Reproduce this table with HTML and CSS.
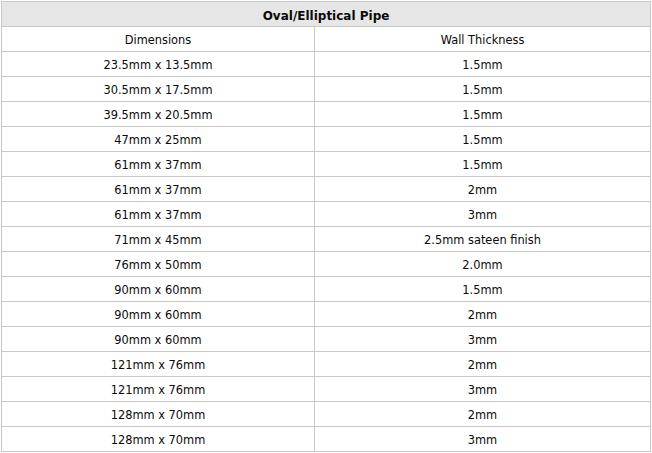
FILE: index.html
```html
<!DOCTYPE html>
<html>
<head>
<meta charset="utf-8">
<link rel="stylesheet" href="styles.css">
</head>
<body>
<table class="spec">
  <colgroup><col class="c1"><col class="c2"></colgroup>
  <thead>
    <tr><th colspan="2" class="title">Oval/Elliptical Pipe</th></tr>
  </thead>
  <tbody>
    <tr><td>Dimensions</td><td>Wall Thickness</td></tr>
    <tr><td>23.5mm x 13.5mm</td><td>1.5mm</td></tr>
    <tr><td>30.5mm x 17.5mm</td><td>1.5mm</td></tr>
    <tr><td>39.5mm x 20.5mm</td><td>1.5mm</td></tr>
    <tr><td>47mm x 25mm</td><td>1.5mm</td></tr>
    <tr><td>61mm x 37mm</td><td>1.5mm</td></tr>
    <tr><td>61mm x 37mm</td><td>2mm</td></tr>
    <tr><td>61mm x 37mm</td><td>3mm</td></tr>
    <tr><td>71mm x 45mm</td><td>2.5mm sateen finish</td></tr>
    <tr><td>76mm x 50mm</td><td>2.0mm</td></tr>
    <tr><td>90mm x 60mm</td><td>1.5mm</td></tr>
    <tr><td>90mm x 60mm</td><td>2mm</td></tr>
    <tr><td>90mm x 60mm</td><td>3mm</td></tr>
    <tr><td>121mm x 76mm</td><td>2mm</td></tr>
    <tr><td>121mm x 76mm</td><td>3mm</td></tr>
    <tr><td>128mm x 70mm</td><td>2mm</td></tr>
    <tr><td>128mm x 70mm</td><td>3mm</td></tr>
  </tbody>
</table>
</body>
</html>
```
FILE: styles.css
```css
html, body {
  margin: 0;
  padding: 0;
  background: #fff;
}
body {
  padding: 1px 0 0 1px;
  font-family: "DejaVu Sans", Verdana, sans-serif;
  font-size: 11.4px;
  color: #0a0a0a;
}
.spec {
  border-collapse: separate;
  border-spacing: 0;
  table-layout: fixed;
  width: 650px;
  border-left: 1px solid #c8c8c8;
  border-top: 1px solid #c8c8c8;
}
.c1 { width: 313px; }
.c2 { width: 336px; }
.spec th,
.spec td {
  height: 24px;
  padding: 0;
  border-right: 1px solid #c8c8c8;
  border-bottom: 1px solid #c8c8c8;
  text-align: center;
  vertical-align: middle;
  line-height: 14px;
  white-space: nowrap;
}
.spec td {
  padding-top: 1px;
  height: 23px;
}
.spec .title {
  background: #e6e6e6;
  font-weight: bold;
  font-size: 12px;
  color: #0a0a0a;
  padding-top: 3px;
  height: 21px;
}
```
